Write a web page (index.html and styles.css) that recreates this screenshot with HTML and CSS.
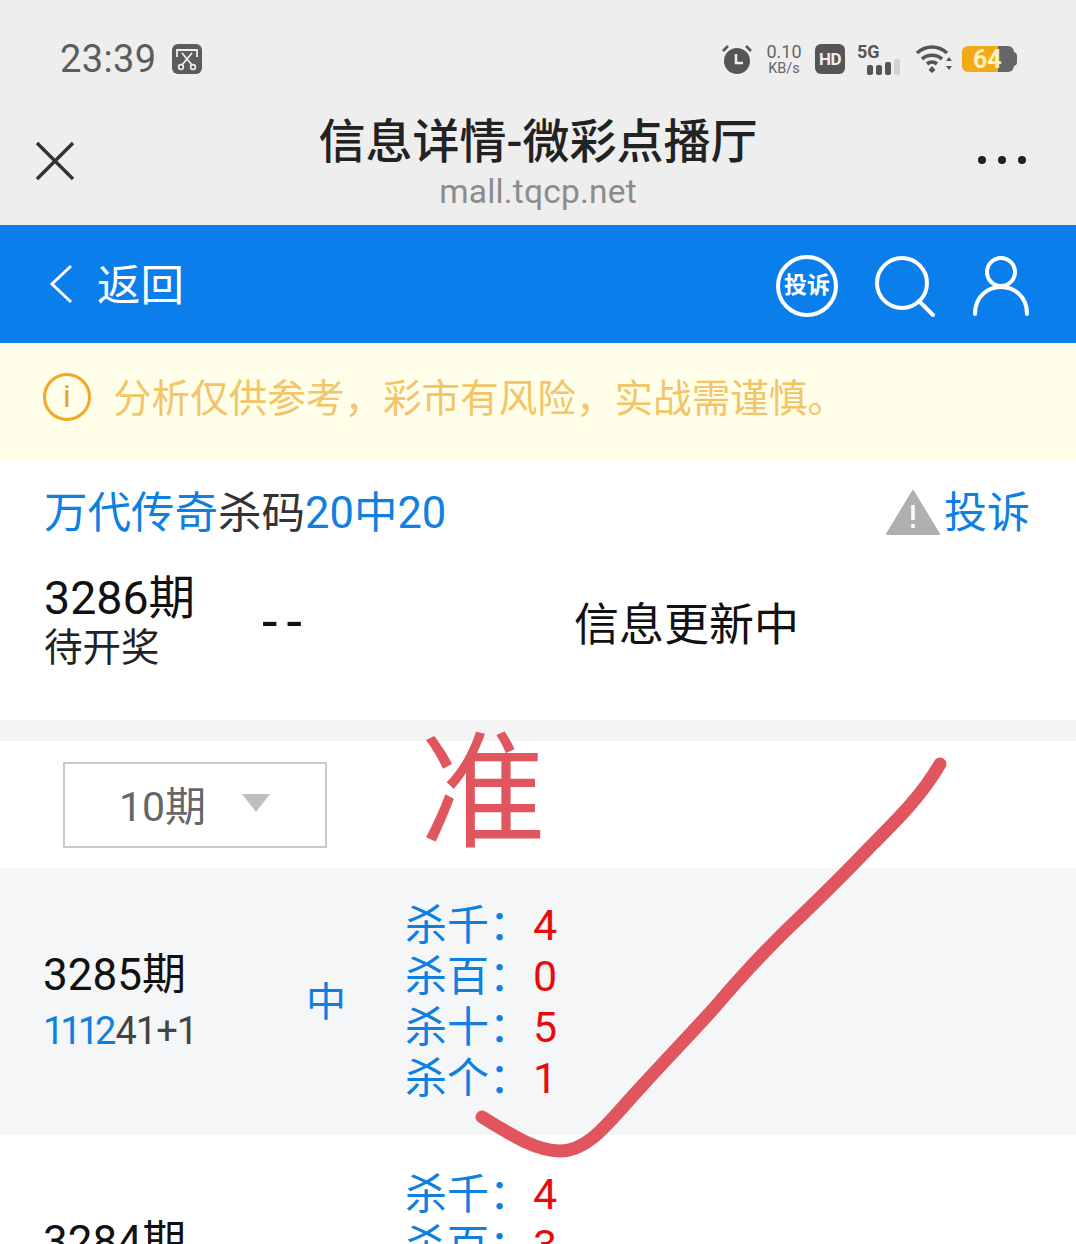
FILE: index.html
```html
<!DOCTYPE html>
<html lang="zh-CN">
<head>
  <meta charset="UTF-8">
  <title>信息详情-微彩点播厅</title>
  <link rel="stylesheet" href="styles.css">
</head>
<body>
<div class="screen">
  <!-- 系统状态栏 -->
  <div class="status">
    <div class="status-left">
      <span class="clock">23:39</span>
      <svg class="cut" width="30" height="30" viewBox="0 0 30 30">
        <rect width="30" height="30" rx="6" fill="#5c5c5c"/>
        <path d="M5 13V6h20v7M10 9l10 12M20 9L10 21" fill="none" stroke="#eee" stroke-width="1.800"/>
        <circle cx="9" cy="23" r="2.400" fill="none" stroke="#eee" stroke-width="1.600"/>
        <circle cx="21" cy="23" r="2.400" fill="none" stroke="#eee" stroke-width="1.600"/>
      </svg>
    </div>
    <div class="status-right">
      <svg class="alarm" width="32" height="32" viewBox="0 0 32 32">
        <circle cx="16" cy="18" r="13" fill="#555"/>
        <path d="M2 8l5-5M30 8l-5-5" stroke="#555" stroke-width="2.600" fill="none"/>
        <path d="M15 11v9h7" stroke="#eee" stroke-width="2.600" fill="none"/>
      </svg>
      <div class="speed"><span>0.10</span><span class="unit">KB/s</span></div>
      <span class="hd">HD</span>
      <div class="signal">
        <span class="five-g">5G</span>
        <div class="bars"><i></i><i></i><i></i><i class="off"></i></div>
      </div>
      <svg class="wifi" width="38" height="30" viewBox="0 0 38 30">
        <path d="M2 9C11 1 23 1 32 9M7 15c6-5 14-5 20 0M12 20c3-2.500 7-2.500 10 0" fill="none" stroke="#555" stroke-width="3.600"/>
        <path d="M17 22l3.500 4-3.500 3-3.500-3z" fill="#555"/>
        <path d="M34 13l3 4h-6zM34 26l3-4h-6z" fill="#555"/>
      </svg>
      <div class="battery"><span class="level">64</span><i class="cap"></i></div>
    </div>
  </div>

  <!-- 浏览器标题 -->
  <div class="browser">
    <svg class="close" width="40" height="40" viewBox="0 0 40 40">
      <path d="M2 2l36 36M38 2L2 38" stroke="#333" stroke-width="3.400" fill="none"/>
    </svg>
    <div class="browser-title">
      <div class="page-name">信息详情-微彩点播厅</div>
      <div class="page-url">mall.tqcp.net</div>
    </div>
    <div class="dots"><i></i><i></i><i></i></div>
  </div>

  <!-- 蓝色导航 -->
  <div class="nav">
    <div class="back">
      <svg width="26" height="40" viewBox="0 0 26 40">
        <path d="M23 2L4 20l19 18" fill="none" stroke="#fff" stroke-width="3"/>
      </svg>
      <span>返回</span>
    </div>
    <div class="nav-icons">
      <span class="complain-badge">投诉</span>
      <svg width="62" height="62" viewBox="0 0 62 62">
        <circle cx="28" cy="28" r="25" fill="none" stroke="#fff" stroke-width="4"/>
        <path d="M45 46l14 14" stroke="#fff" stroke-width="4" stroke-linecap="round"/>
      </svg>
      <svg width="58" height="60" viewBox="0 0 58 60">
        <circle cx="29" cy="16" r="14" fill="none" stroke="#fff" stroke-width="4"/>
        <path d="M3 58c0-36 52-36 52 0" fill="none" stroke="#fff" stroke-width="4" stroke-linecap="round"/>
      </svg>
    </div>
  </div>

  <!-- 提示 -->
  <div class="notice">
    <span class="notice-icon">i</span>
    <span>分析仅供参考，彩市有风险，实战需谨慎。</span>
  </div>

  <div class="info">
    <div class="info-head">
      <div class="info-title"><span class="blue">万代传奇</span>杀码<span class="blue">20中20</span></div>
      <div class="report">
        <svg width="54" height="46" viewBox="0 0 54 46">
          <path d="M27 2L53 45H1z" fill="#b0b0b0" stroke="#b0b0b0" stroke-linejoin="round" stroke-width="2"/>
          <path d="M27 16v15M27 35v4" stroke="#fff" stroke-width="3.500"/>
        </svg>
        <span>投诉</span>
      </div>
    </div>
    <div class="current">
      <div class="period">
        <div class="period-num">3286期</div>
        <div class="period-state">待开奖</div>
      </div>
      <div class="dashes">--</div>
      <div class="updating">信息更新中</div>
    </div>
  </div>

  <div class="filter">
    <div class="select">
      <span>10期</span>
      <i class="arrow"></i>
    </div>
  </div>

  <div class="row row-gray">
    <div class="row-period">
      <div class="row-num">3285期</div>
      <div class="row-code"><span class="code-hit">1112</span>41+1</div>
    </div>
    <div class="row-hit">中</div>
    <ul class="kills">
      <li><span class="kill-label">杀千：</span><span class="kill-val">4</span></li>
      <li><span class="kill-label">杀百：</span><span class="kill-val">0</span></li>
      <li><span class="kill-label">杀十：</span><span class="kill-val">5</span></li>
      <li><span class="kill-label">杀个：</span><span class="kill-val">1</span></li>
    </ul>
  </div>

  <div class="row">
    <div class="row-period">
      <div class="row-num">3284期</div>
    </div>
    <div class="row-hit"></div>
    <ul class="kills">
      <li><span class="kill-label">杀千：</span><span class="kill-val">4</span></li>
      <li><span class="kill-label">杀百：</span><span class="kill-val">3</span></li>
    </ul>
  </div>

  <!-- 手写批注 -->
  <div class="mark-char">准</div>
  <svg class="mark-check" width="1076" height="1244" viewBox="0 0 1076 1244">
    <path d="M482 1117C510 1134 535 1151 560 1151C590 1151 610 1120 641 1087C670 1055 690 1035 715 1007C745 972 770 945 800 917C825 893 850 868 870 847C900 817 922 795 940 764" fill="none" stroke="#e0555e" stroke-width="13" stroke-linecap="round"/>
  </svg>
</div>
</body>
</html>
```

FILE: styles.css
```css
* { box-sizing: border-box; margin: 0; padding: 0; }
html, body { width: 1076px; height: 1244px; overflow: hidden; background: #fff; }
body { font-family: Roboto, "Noto Sans CJK SC", sans-serif; color: #111; }
ul { list-style: none; }
.blue { color: #0f80e0; }

.screen { position: relative; width: 1076px; height: 1244px; overflow: hidden; }

/* status bar */
.status { height: 100px; background: #eee; display: flex; justify-content: space-between; align-items: center; padding: 18px 60px 0 60px; }
.status-left { display: flex; align-items: center; gap: 15px; }
.clock { font-size: 38px; color: #5c5c5c; letter-spacing: 0.4px; }
.status-right { display: flex; align-items: center; }
.alarm { margin-right: 12px; }
.speed { display: flex; flex-direction: column; align-items: center; width: 38px; margin-right: 12px; font-size: 18px; line-height: 18px; color: #666; }
.speed .unit { font-size: 14.500px; line-height: 15px; }
.hd { width: 30px; height: 30px; border-radius: 6px; background: #555; color: #eee; font-size: 17px; font-weight: 700; line-height: 30px; text-align: center; margin-right: 12px; letter-spacing: -0.5px; }
.signal { width: 46px; height: 32px; margin-right: 12px; position: relative; }
.five-g { position: absolute; left: 0; top: -2px; font-size: 18px; font-weight: 700; color: #555; }
.bars { position: absolute; left: 10px; bottom: 0; display: flex; gap: 3px; align-items: flex-end; }
.bars i { width: 6px; height: 10px; border-radius: 2px; background: #555; }
.bars i:nth-child(3) { height: 13px; }
.bars i.off { height: 16px; background: #d2d2d2; }
.wifi { margin-right: 9px; }
.battery { width: 52px; height: 26px; margin-right: 2px; border-radius: 6px; background: linear-gradient(90deg, #f4a916 0 70%, #666 70%); position: relative; color: #fdf3c0; font-size: 25px; font-weight: 700; line-height: 27px; padding-left: 11px; }
.battery .cap { position: absolute; right: -3px; top: 6px; width: 8px; height: 14px; border-radius: 4px; background: #666; }

/* browser title */
.browser { height: 125px; background: #eee; position: relative; display: flex; justify-content: center; }
.close { position: absolute; left: 35px; top: 41px; }
.browser-title { text-align: center; margin-top: 13px; }
.page-name { font-size: 47px; line-height: 58px; color: #222; font-weight: 500; white-space: nowrap; }
.page-url { font-size: 33.500px; line-height: 42px; color: #8c8c8c; letter-spacing: 0.2px; }
.dots { position: absolute; right: 50px; top: 56px; display: flex; gap: 12px; }
.dots i { width: 8px; height: 8px; border-radius: 50%; background: #222; }

/* nav */
.nav { height: 118px; background: #0a7eea; display: flex; justify-content: space-between; align-items: center; padding: 0 46px 0 48px; color: #fff; }
.back { display: flex; align-items: center; gap: 23px; font-size: 43.500px; line-height: 52px; }
.back span { margin-top: 6px; }
.nav-icons { display: flex; align-items: center; gap: 36px; margin-top: 3px; }
.complain-badge { width: 62px; height: 62px; border: 4px solid #fff; border-radius: 50%; font-size: 23px; font-weight: 700; line-height: 54px; text-align: center; white-space: nowrap; }

/* notice */
.notice { height: 119px; background: #fffee9; display: flex; align-items: center; padding: 0 0 16px 43px; gap: 22px; color: #f3c468; font-size: 38.600px; }
.notice-icon { width: 48px; height: 48px; margin-top: 5px; border: 3.500px solid #f5a623; border-radius: 50%; color: #e8a030; font-size: 32px; line-height: 40px; text-align: center; }

/* info */
.info { height: 258px; padding: 0 45px 0 44px; }
.info-head { display: flex; justify-content: space-between; align-items: center; height: 94px; }
.info-title { font-size: 43.500px; color: #333; }
.report { display: flex; align-items: center; gap: 4px; font-size: 43px; color: #0f80e0; margin-right: 1px; }
.report svg { margin-top: 6px; }
.current { display: flex; align-items: flex-start; padding-top: 15px; }
.period { width: 218px; }
.period-num { font-size: 46.500px; line-height: 55px; color: #111; }
.period-state { font-size: 38.500px; line-height: 44px; color: #222; }
.dashes { width: 312px; font-size: 56px; line-height: 66px; margin-top: 18px; color: #111; letter-spacing: 9px; }
.updating { font-size: 45px; line-height: 66px; margin-top: 22px; color: #111; }

/* filter */
.filter { height: 148px; border-top: 21px solid #f4f4f4; padding: 21px 0 0 63px; }
.select { width: 264px; height: 86px; border: 2px solid #c9c9c9; display: flex; align-items: center; padding: 0 0 4px 54px; gap: 36px; font-size: 41px; color: #666; }
.arrow { width: 0; height: 0; border-left: 14px solid transparent; border-right: 14px solid transparent; border-top: 18px solid #bfbfbf; }

/* rows */
.row { height: 267px; display: flex; align-items: flex-start; padding-left: 43px; }
.row-gray { background: #f5f6f7; }
.row-period { width: 263px; padding-top: 79px; }
.row-num { font-size: 44px; line-height: 56px; color: #111; }
.row-code { font-size: 38px; line-height: 57px; color: #444; letter-spacing: -1px; }
.code-hit { color: #0f80e0; letter-spacing: -4px; margin-right: 3px; }
.row-hit { width: 99px; margin-top: 107px; font-size: 40px; line-height: 56px; color: #0f80e0; }
.kills { padding-top: 32px; }
.row + .row .kills { padding-top: 34px; }
.kills li { display: flex; height: 51px; line-height: 51px; font-size: 42px; }
.kill-label { width: 128px; color: #0f80e0; white-space: nowrap; }
.kill-val { color: #e60c0c; font-size: 43px; }

/* annotation */
.mark-char { position: absolute; left: 420px; top: 724px; font-size: 126px; line-height: 140px; color: #e0555e; }
.mark-check { position: absolute; left: 0; top: 0; pointer-events: none; }
```
